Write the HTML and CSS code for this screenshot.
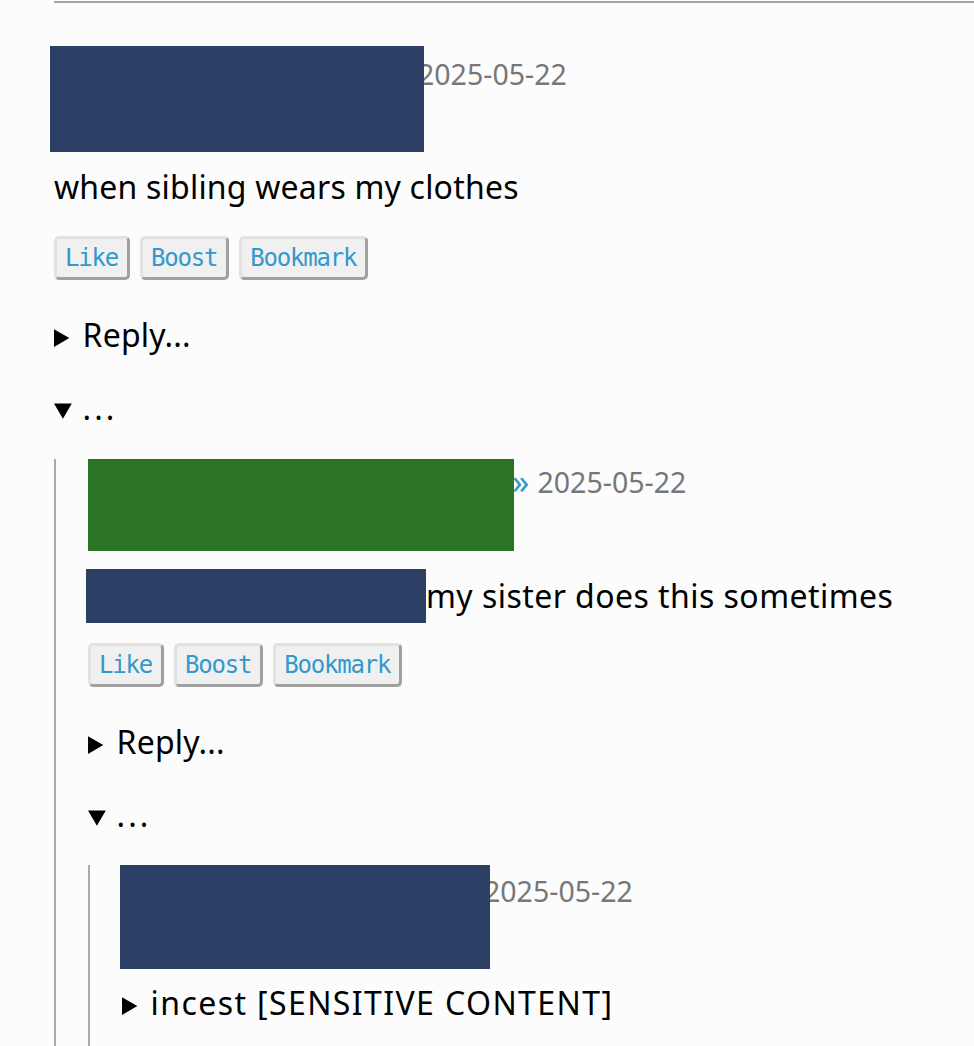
FILE: index.html
```html
<!DOCTYPE html>
<html lang="en">
<head>
<meta charset="utf-8">
<title>Thread</title>
<link rel="stylesheet" href="styles.css">
</head>
<body>
<hr class="top-rule">
<article class="post">
  <div class="post-head">
    <span class="redact redact-navy head-block"></span>
    <span class="date">2025-05-22</span>
  </div>
  <p class="post-text">when sibling wears my clothes</p>
  <div class="actions">
    <button class="btn">Like</button>
    <button class="btn">Boost</button>
    <button class="btn">Bookmark</button>
  </div>
  <details class="reply"><summary>Reply...</summary></details>
  <details class="more" open>
    <summary>...</summary>
    <div class="thread">
      <article class="post">
        <div class="post-head">
          <span class="redact redact-green head-block-green"></span>
          <span class="arrow">»</span>
          <span class="date date-spaced">2025-05-22</span>
        </div>
        <p class="post-text post-text-mention"><span class="redact redact-navy mention"></span>my sister does this sometimes</p>
        <div class="actions actions-tight">
          <button class="btn">Like</button>
          <button class="btn">Boost</button>
          <button class="btn">Bookmark</button>
        </div>
        <details class="reply"><summary>Reply...</summary></details>
        <details class="more" open>
          <summary>...</summary>
          <div class="thread thread-inner">
            <article class="post post-last">
              <div class="post-head">
                <span class="redact redact-navy head-block-3"></span>
                <span class="date date-inner">2025-05-22</span>
              </div>
              <details class="cw"><summary>incest [SENSITIVE CONTENT]</summary></details>
            </article>
          </div>
        </details>
      </article>
    </div>
  </details>
</article>
</body>
</html>
```

FILE: styles.css
```css
html, body {
  margin: 0;
  padding: 0;
  background: #fcfcfc;
}

body {
  font-family: "Noto Sans", sans-serif;
  font-size: 32px;
  line-height: 40px;
  letter-spacing: 0.2px;
  color: #000;
  padding-left: 54px;
  overflow: hidden;
  height: 1046px;
}

.top-rule {
  margin: 1px 0 0 0;
  border: 0;
  border-top: 2px solid #a3a3a3;
  height: 0;
}

.post-head {
  display: flex;
  align-items: flex-start;
  margin-top: 43px;
}

.redact {
  display: inline-block;
  position: relative;
  z-index: 1;
  flex: none;
}

.redact-navy { background: #2c4066; }
.redact-green { background: #2b7425; }

.head-block {
  width: 374px;
  height: 106px;
  margin-left: -4px;
}

.date {
  color: #777;
  font-size: 28.5px;
  line-height: 36px;
  letter-spacing: 0;
  margin-left: -6px;
  margin-top: 10px;
}

.post-text {
  margin: 15px 0 0 0;
}

.post-text-mention {
  display: flex;
  align-items: center;
  margin-top: 18px;
  letter-spacing: 0.45px;
}

.actions {
  display: flex;
  gap: 10px;
  margin-top: 29px;
}

.actions-tight {
  margin-top: 20px;
}

.btn {
  font-family: "DejaVu Sans Mono", monospace;
  font-size: 24px;
  letter-spacing: -1.2px;
  line-height: 26px;
  height: 44px;
  color: #3399cc;
  background: #f0f0f0;
  border: 3px solid;
  border-color: #e2e2e2 #a0a0a0 #a0a0a0 #e2e2e2;
  border-radius: 5px;
  padding: 6px 9px 6px 8px;
  margin: 0;
}

details summary {
  cursor: pointer;
}

summary::marker {
  font-size: 27px;
}

.reply {
  margin-top: 35px;
}

.more {
  margin-top: 31px;
}

.more > summary {
  letter-spacing: 3px;
}

.thread {
  border-left: 2px solid #aaa;
  padding-left: 32px;
  margin-top: 29px;
}

.thread .post-head {
  margin-top: 0;
}

.head-block-green {
  width: 426px;
  height: 92px;
}

.arrow {
  color: #3399cc;
  font-size: 34px;
  line-height: 36px;
  margin-left: -2px;
  margin-top: 4px;
}

.date-spaced {
  margin-left: 8px;
  margin-top: 5px;
}

.mention {
  width: 340px;
  height: 54px;
  margin-left: -2px;
}

.thread-inner {
  margin-top: 28px;
}

.head-block-3 {
  width: 370px;
  height: 104px;
  margin-left: -2px;
}

.date-inner {
  margin-top: 8px;
}

.cw {
  margin-top: 14px;
}

.cw > summary {
  letter-spacing: 1.4px;
}

.post-last {
  padding-bottom: 200px;
}
```
